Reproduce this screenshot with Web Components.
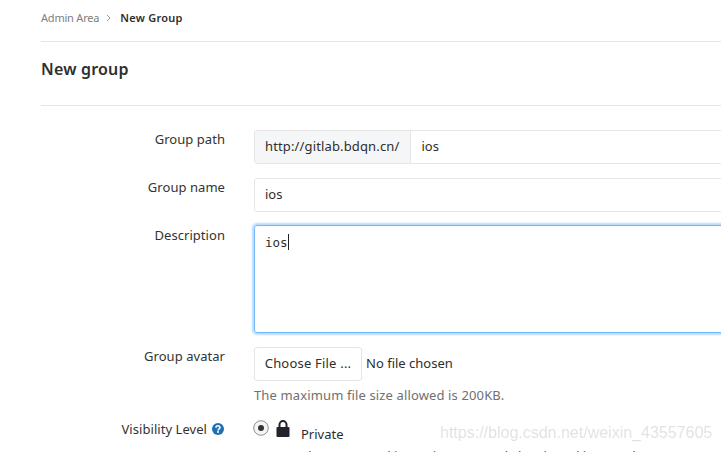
<!DOCTYPE html>
<html>
<head>
<meta charset="utf-8">
<style>
  html, body { margin: 0; height: 452px; overflow: hidden; background: #fff; }
  body { font-family: "Noto Sans", sans-serif; color: #2e2e2e; }
</style>
</head>
<body>
<gl-page>
  <gl-breadcrumb slot="crumbs" parent="Admin Area" current="New Group"></gl-breadcrumb>
  <gl-title slot="title">New group</gl-title>
  <gl-row label="Group path" style="height:34px">
    <gl-input prefix="http://gitlab.bdqn.cn/" value="ios"></gl-input>
  </gl-row>
  <gl-row label="Group name" style="height:34px;margin-top:14px">
    <gl-input value="ios"></gl-input>
  </gl-row>
  <gl-row label="Description" style="height:108px;margin-top:13px;--label-top:1px">
    <gl-textarea value="ios"></gl-textarea>
  </gl-row>
  <gl-row label="Group avatar" style="margin-top:14px">
    <gl-file help="The maximum file size allowed is 200KB."></gl-file>
  </gl-row>
  <gl-row label="Visibility Level" info style="margin-top:14px;--label-top:2px">
    <gl-visibility title-text="Private" text="The group and its projects can only be viewed by members."></gl-visibility>
  </gl-row>
</gl-page>
<gl-watermark>https://blog.csdn.net/weixin_43557605</gl-watermark>

<script>
class GlPage extends HTMLElement {
  constructor() {
    super();
    this.attachShadow({ mode: "open" });
    this.shadowRoot.innerHTML = `
      <style>
        :host { display: block; width: 1000px; padding-left: 41px; }
        .crumbs { height: 41px; border-bottom: 1px solid #e5e5e5; }
        .title { height: 63px; border-bottom: 1px solid #e5e5e5; }
        form { display: block; padding-top: 24px; }
      </style>
      <div class="crumbs"><slot name="crumbs"></slot></div>
      <div class="title"><slot name="title"></slot></div>
      <form><slot></slot></form>
    `;
  }
}

class GlBreadcrumb extends HTMLElement {
  constructor() {
    super();
    this.attachShadow({ mode: "open" });
  }
  connectedCallback() {
    this.shadowRoot.innerHTML = `
      <style>
        :host { display: flex; align-items: center; height: 35px; font-size: 11px; }
        .parent { color: #808080; letter-spacing: -.2px; }
        svg { margin: 0 9px 0 7px; }
        .current { color: #2e2e2e; font-weight: 600; letter-spacing: .25px; }
      </style>
      <span class="parent">${this.getAttribute("parent")}</span>
      <svg width="5" height="8" viewBox="0 0 5 8"><path d="M1 1l3 3-3 3" fill="none" stroke="#999"/></svg>
      <span class="current">${this.getAttribute("current")}</span>
    `;
  }
}

class GlTitle extends HTMLElement {
  constructor() {
    super();
    this.attachShadow({ mode: "open" });
    this.shadowRoot.innerHTML = `
      <style>
        :host { display: flex; align-items: center; height: 53px; font-size: 16px; font-weight: 600; letter-spacing: .2px; color: #2e2e2e; }
      </style>
      <slot></slot>
    `;
  }
}

class GlRow extends HTMLElement {
  constructor() {
    super();
    this.attachShadow({ mode: "open" });
  }
  connectedCallback() {
    const info = this.hasAttribute("info")
      ? `<svg width="12" height="12" viewBox="0 0 12 12"><circle cx="6" cy="6" r="6" fill="#1f6fb5"/><path d="M4 4.7c0-2.5 4-2.5 4-.1 0 1.5-2 1.4-2 2.8" fill="none" stroke="#fff" stroke-width="1.6"/><rect x="5.1" y="8.1" width="1.8" height="1.7" fill="#fff"/></svg>`
      : "";
    const nudge = this.hasAttribute("info") ? "margin-right: 1px;" : "";
    this.shadowRoot.innerHTML = `
      <style>
        :host { display: grid; grid-template-columns: 184px 1fr; column-gap: 29px; font-size: 13px; }
        .label { margin-top: var(--label-top, 0); ${nudge} display: flex; justify-content: flex-end; align-items: center; gap: 5px; height: 18px; color: #333; }
        .label span { letter-spacing: .05px; }
      </style>
      <div class="label"><span>${this.getAttribute("label")}</span>${info}</div>
      <div><slot></slot></div>
    `;
  }
}

class GlInput extends HTMLElement {
  constructor() {
    super();
    this.attachShadow({ mode: "open" });
  }
  connectedCallback() {
    const prefix = this.getAttribute("prefix");
    this.shadowRoot.innerHTML = `
      <style>
        :host { display: flex; height: 34px; box-sizing: border-box; border: 1px solid #e5e5e5; border-radius: 3px; font-size: 13px; color: #2e2e2e; }
        .prefix { display: flex; align-items: center; padding: 0 11px 2px 10px; letter-spacing: .14px; background: #f5f6f8; border-right: 1px solid #e5e5e5; border-radius: 2px 0 0 2px; }
        .value { display: flex; align-items: center; padding: 0 10px 2px; }
      </style>
      ${prefix ? `<div class="prefix">${prefix}</div>` : ""}
      <div class="value">${this.getAttribute("value")}</div>
    `;
  }
}

class GlTextarea extends HTMLElement {
  constructor() {
    super();
    this.attachShadow({ mode: "open" });
  }
  connectedCallback() {
    this.shadowRoot.innerHTML = `
      <style>
        :host { display: block; height: 108px; box-sizing: border-box; border: 1px solid #73b9f5; border-radius: 3px; box-shadow: 0 0 2px 2px #b8dcfc; padding: 8px 10px; font-family: "DejaVu Sans Mono", monospace; font-size: 12.5px; line-height: 18px; color: #2e2e2e; }
        i { display: inline-block; width: 1px; height: 16px; background: #222; vertical-align: -3px; }
      </style>
      ${this.getAttribute("value")}<i></i>
    `;
  }
}

class GlFile extends HTMLElement {
  constructor() {
    super();
    this.attachShadow({ mode: "open" });
  }
  connectedCallback() {
    this.shadowRoot.innerHTML = `
      <style>
        :host { display: block; font-size: 13px; color: #2e2e2e; }
        .line { display: flex; align-items: center; gap: 4px; }
        button { height: 34px; width: 108px; padding: 0 0 2px; background: #fff; border: 1px solid #e5e5e5; border-radius: 3px; font: inherit; letter-spacing: .2px; color: inherit; }
        span { position: relative; top: -1px; }
        p { margin: 5px 0 0; font-size: 13px; letter-spacing: .13px; line-height: 18px; color: #707070; }
      </style>
      <div class="line"><button type="button">Choose File ...</button><span>No file chosen</span></div>
      <p>${this.getAttribute("help")}</p>
    `;
  }
}

class GlVisibility extends HTMLElement {
  constructor() {
    super();
    this.attachShadow({ mode: "open" });
  }
  connectedCallback() {
    this.shadowRoot.innerHTML = `
      <style>
        :host { display: grid; grid-template-columns: 15px 15px 1fr; column-gap: 8px; align-items: start; font-size: 13px; color: #2e2e2e; margin-left: -1px; }
        .name { margin-left: 2px; padding-top: 7px; line-height: 18px; }
        p { grid-column: 3; margin: 4px 0 0 2px; line-height: 18px; color: #555; white-space: nowrap; }
        svg { display: block; margin-top: 2px; }
      </style>
      <svg width="16" height="16" viewBox="0 0 16 16">
        <circle cx="8" cy="8" r="7.3" fill="#f4f4f4" stroke="#8f8f8f"/>
        <circle cx="8" cy="8" r="3" fill="#333"/>
      </svg>
      <svg width="14" height="17" viewBox="0 0 14 17">
        <path d="M3.5 8V4.6a3.5 3.5 0 0 1 7 0V8" fill="none" stroke="#23232b" stroke-width="2"/>
        <rect x="0.5" y="7" width="13" height="10" rx="1" fill="#23232b"/>
      </svg>
      <div class="name">${this.getAttribute("title-text")}</div>
      <p>${this.getAttribute("text")}</p>
    `;
  }
}

class GlWatermark extends HTMLElement {
  constructor() {
    super();
    this.attachShadow({ mode: "open" });
    this.shadowRoot.innerHTML = `
      <style>
        :host { position: absolute; left: 440px; top: 424px; font: 16px/18px "Liberation Sans", sans-serif; color: rgba(150,150,150,.28); white-space: nowrap; }
      </style>
      <slot></slot>
    `;
  }
}

customElements.define("gl-page", GlPage);
customElements.define("gl-breadcrumb", GlBreadcrumb);
customElements.define("gl-title", GlTitle);
customElements.define("gl-row", GlRow);
customElements.define("gl-input", GlInput);
customElements.define("gl-textarea", GlTextarea);
customElements.define("gl-file", GlFile);
customElements.define("gl-visibility", GlVisibility);
customElements.define("gl-watermark", GlWatermark);
</script>
</body>
</html>
